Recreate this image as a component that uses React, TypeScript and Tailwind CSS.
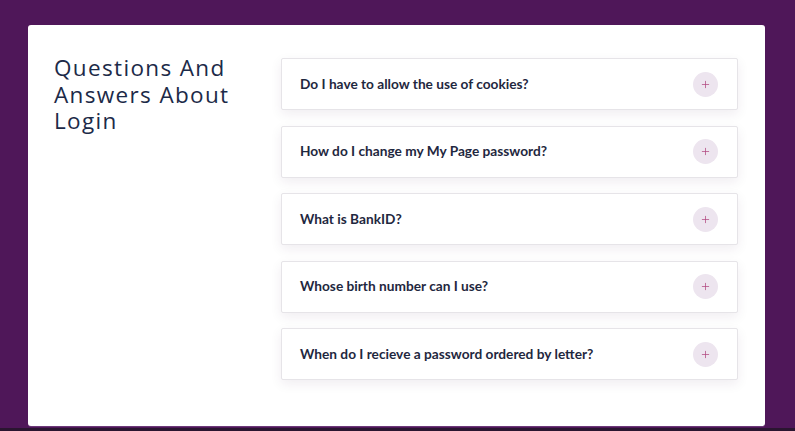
import { Plus } from 'lucide-react'

const questions = [
  'Do I have to allow the use of cookies?',
  'How do I change my My Page password?',
  'What is BankID?',
  'Whose birth number can I use?',
  'When do I recieve a password ordered by letter?',
]

export default function App() {
  return (
    <div className="h-[431px] w-full bg-[#4f1759] flex flex-col">
      <div className="flex-1 pt-[25px] pl-[28px] pr-[30px]">
        {/* card */}
        <div className="h-[401px] bg-white rounded-[3px] flex pl-[26px] pt-[33px] shadow-[0_1px_0_#6b3a78]">
          <div className="w-[227px] -mt-[3px]">
            <h2 className="text-[22.5px] leading-[26.5px] tracking-[1.35px] text-[#1c2a48] font-['Open_Sans',sans-serif]">
              Questions And Answers About Login
            </h2>
          </div>
          <div className="w-[457px] flex flex-col gap-[15.5px]">
            {questions.map(q => (
              <div key={q}
                className="h-[52px] flex items-center justify-between pl-[18px] pr-[19px] bg-white border border-[#e6e4e8] rounded-[2px] shadow-[0_4px_12px_rgba(60,30,80,0.08)]">
                <span className="text-[13.7px] font-bold text-[#1f2840] font-['Lato',sans-serif]">{q}</span>
                <span className="w-[25px] h-[25px] rounded-full bg-[#ede5ef] flex items-center justify-center">
                  <Plus size={11} strokeWidth={1.6} className="text-[#b1467e]" />
                </span>
              </div>
            ))}
          </div>
        </div>
      </div>
      <div className="h-[3px] bg-[#2a1530]" />
    </div>
  )
}
